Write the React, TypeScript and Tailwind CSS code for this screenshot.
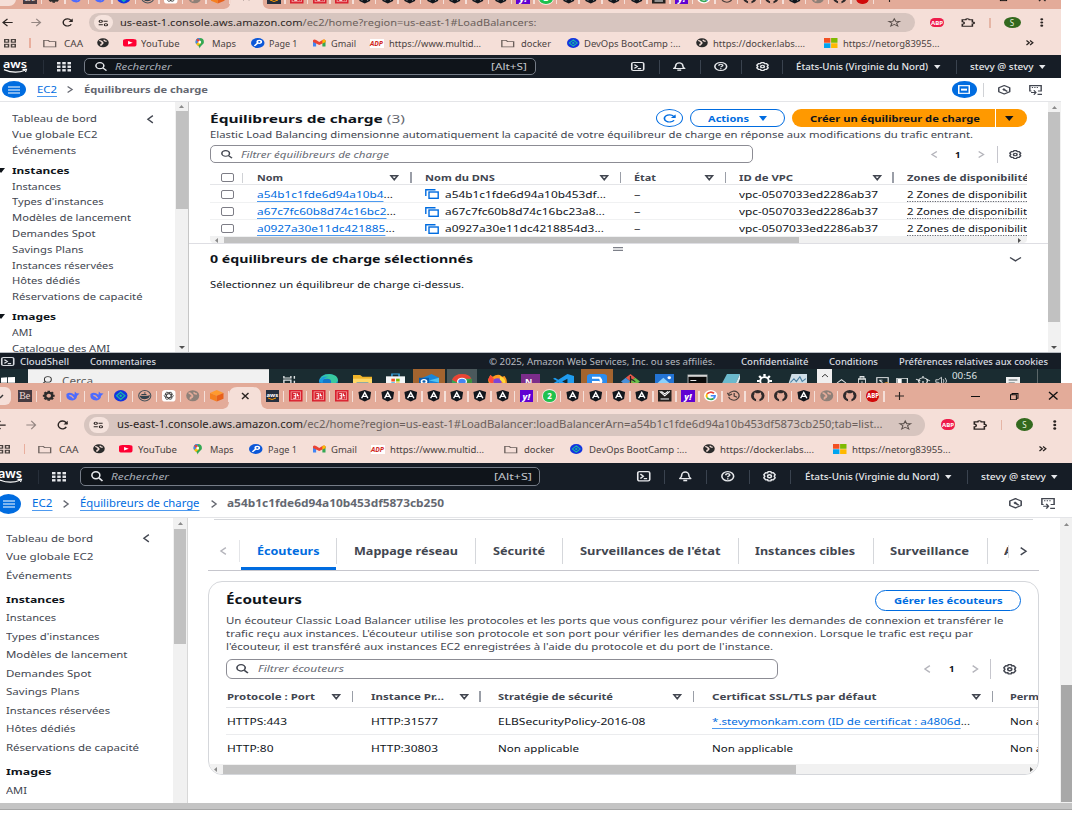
import React, { useLayoutEffect, useRef, useState } from "react";
import type { ReactNode } from "react";

/** One line of text, stretched horizontally to fill the width its class gives. */
function T({ c, children }: { c: string; children: ReactNode }) {
  const outer = useRef<HTMLSpanElement>(null);
  const inner = useRef<HTMLSpanElement>(null);
  const [scale, setScale] = useState(1);
  useLayoutEffect(() => {
    if (outer.current && inner.current) {
      const box = outer.current.getBoundingClientRect().width;
      const text = parseFloat(getComputedStyle(inner.current).width);
      if (text > 0) setScale(box / text);
    }
  }, []);
  return (
    <span ref={outer} className={`block shrink-0 whitespace-nowrap ${c}`}>
      <span ref={inner} className="inline-block origin-left whitespace-pre" style={{ transform: `scaleX(${scale})` }}>
        {children}
      </span>
    </span>
  );
}

function S({ c, vb = "0 0 16 16", children }: { c: string; vb?: string; children: ReactNode }) {
  return (
    <svg className={`block shrink-0 overflow-visible ${c}`} viewBox={vb} preserveAspectRatio="none" fill="none" stroke="currentColor">
      {children}
    </svg>
  );
}

/* ---------- generic icons ---------- */
const Caret = ({ c }: { c: string }) => (
  <S c={c} vb="0 0 8 6"><path d="M0 0H8L4 6Z" fill="currentColor" stroke="none" /></S>
);
const SortIcon = () => (
  <S c="w-[8.5px] h-[5.5px] text-[#424650]" vb="0 0 9 6"><path d="M1 .8H8L4.5 5.2Z" strokeWidth="1.6" /></S>
);
const Left = ({ c }: { c: string }) => (
  <S c={c} vb="0 0 7 9"><path d="M6.3 .7L1 4.5L6.3 8.3" strokeWidth="1.5" /></S>
);
const Right = ({ c }: { c: string }) => (
  <S c={c} vb="0 0 7 9"><path d="M.7 .7L6 4.5L.7 8.3" strokeWidth="1.5" /></S>
);
const Lens = ({ c }: { c: string }) => (
  <S c={c}><circle cx="6.5" cy="6.5" r="5.3" strokeWidth="2.100" /><path d="M10.5 10.5L15.3 15.3" strokeWidth="2.300" /></S>
);
const Gear = ({ c }: { c: string }) => (
  <S c={c}>
    <path d="M6.2 1H9.8L10.4 3L12.6 2.6L14.9 5.6L13.8 8L14.9 10.4L12.6 13.4L10.4 13L9.8 15H6.2L5.6 13L3.4 13.4L1.1 10.4L2.2 8L1.1 5.6L3.4 2.6L5.6 3Z" strokeWidth="2" strokeLinejoin="round" />
    <circle cx="8" cy="8" r="2.3" strokeWidth="2" />
  </S>
);
const ShellIcon = ({ c }: { c: string }) => (
  <S c={c}><rect x=".9" y="1" width="14.2" height="14" rx="2" strokeWidth="1.900" /><path d="M4 4.5L7.5 8L4 11.5M8 11.8H12" strokeWidth="1.900" /></S>
);
const Bell = ({ c }: { c: string }) => (
  <S c={c}><path d="M1 11.5C3.5 9.5 3.5 8 3.5 6A4.5 4.5 0 0 1 12.500 6C12.500 8 12.500 9.500 15 11.500Z" strokeWidth="2" strokeLinejoin="round" /><path d="M5.500 14.500H10.500" strokeWidth="2.400" /></S>
);
const Help = ({ c }: { c: string }) => (
  <S c={c}><circle cx="8" cy="8" r="7" strokeWidth="1.900" /><path d="M5.700 6.500C5.700 3.300 10.500 3.500 10.300 6.300C10.200 7.800 8 7.700 8 9.500M8 11V12.800" strokeWidth="1.900" /></S>
);
const Hexagon = ({ c }: { c: string }) => (
  <S c={c}><path d="M8 1L15 4.500V11.500L8 15L1 11.500V4.500Z" strokeWidth="1.900" strokeLinejoin="round" /><path d="M12 11L7.500 7.500" strokeWidth="2.200" /><circle cx="7.500" cy="7.500" r="1.300" fill="currentColor" strokeWidth="1" /></S>
);
const TermArrow = ({ c }: { c: string }) => (
  <S c={c}><path d="M3 9.500H1V1H15V9.500H11M3.500 4H5M6.500 4H8M9.500 4H11M2.500 12H8M6 8.500L8.500 12L6 15.500M10.500 15H16" strokeWidth="1.700" /></S>
);
const Dots = ({ c }: { c: string }) => (
  <S c={c} vb="0 0 4 14"><g fill="currentColor" stroke="none"><circle cx="2" cy="2" r="1.700" /><circle cx="2" cy="7" r="1.700" /><circle cx="2" cy="12" r="1.700" /></g></S>
);
const Star = ({ c }: { c: string }) => (
  <S c={c}><path d="M8 1.300L9.900 6H15L11 9.200L12.500 14.500L8 11.500L3.500 14.500L5 9.200L1 6H6.100Z" strokeWidth="1.400" /></S>
);
const Puzzle = ({ c }: { c: string }) => (
  <S c={c}><path d="M1.500 3H5.500C5.500 .5 9.500 .5 9.500 3H13V7C16 7 16 10.500 13 10.500V14.500H1.500V11C4.500 11 4.500 6.500 1.500 6.500Z" strokeWidth="1.800" /></S>
);
const Tune = ({ c }: { c: string }) => (
  <S c={c}><circle cx="4" cy="4.500" r="2.300" strokeWidth="1.800" /><path d="M8 4.500H14M1 11.500H7" strokeWidth="1.900" /><circle cx="11.500" cy="11.500" r="2.300" strokeWidth="1.800" /></S>
);
const BackArrow = ({ c }: { c: string }) => (
  <S c={c}><path d="M15.500 8H2M8 1.500L1.500 8L8 14.500" strokeWidth="2" /></S>
);
const FwdArrow = ({ c }: { c: string }) => (
  <S c={c}><path d="M.5 8H14M8 1.500L14.500 8L8 14.500" strokeWidth="1.900" /></S>
);
const Reload = ({ c }: { c: string }) => (
  <S c={c}><path d="M13.500 11A6.300 6.300 0 1 1 13 4L15 6" strokeWidth="2.100" /><path d="M15.500 1V7H9.500Z" fill="currentColor" stroke="none" /></S>
);
const AppsIcon = ({ c }: { c: string }) => (
  <S c={c}><g strokeWidth="2"><rect x="1" y="1" width="5" height="5" /><rect x="10" y="1" width="5" height="5" /><rect x="1" y="10" width="5" height="5" /><rect x="10" y="10" width="5" height="5" /></g></S>
);
const GridDots = ({ c }: { c: string }) => (
  <S c={c}><g fill="currentColor" stroke="none">
    {[0, 6, 12].map((y) => [0, 6, 12].map((x) => <rect key={`${x}-${y}`} x={x} y={y} width="4" height="4" />))}
  </g></S>
);
const Folder = ({ c }: { c: string }) => (
  <S c={c}><path d="M1 2.500H6L8 4.700H15V14H1Z" strokeWidth="1.600" /></S>
);
const Globe = ({ c }: { c: string }) => (
  <S c={c}><circle cx="8" cy="8" r="7.700" fill="currentColor" stroke="none" /><path d="M3 4.500Q5 4 6.500 6.500Q8.500 8 7 10Q5 9.500 5.500 13" stroke="#f5dfd8" strokeWidth="2.300" /><path d="M9.500 3Q9.500 5.500 13 5.500" stroke="#f5dfd8" strokeWidth="2" /></S>
);
const YouTube = ({ c }: { c: string }) => (
  <S c={c}><rect width="16" height="16" rx="4" fill="#ff0033" stroke="none" /><path d="M6 4.500V11.500L11.500 8Z" fill="#fff" stroke="none" /></S>
);
const Pin = ({ c }: { c: string }) => (
  <S c={c}><g stroke="none"><path d="M8 16C7 11 1 10 1 6A7 6 0 0 1 15 6C15 10 9 11 8 16Z" fill="#34a853" /><path d="M1 6A7 6 0 0 1 8 0V6L2 9Q1 8 1 6Z" fill="#4285f4" /><path d="M2 3L5 .6L9 4L6 7Z" fill="#ea4335" /><path d="M2 9L7 5L10 8L5 12Z" fill="#fbbc04" /><circle cx="8" cy="6" r="2.300" fill="#fff" /></g></S>
);
const PageIcon = ({ c }: { c: string }) => (
  <S c={c}><circle cx="8" cy="8" r="8" fill="#0b57d8" stroke="none" /><circle cx="9.800" cy="6" r="2.400" stroke="#fff" strokeWidth="2" /><path d="M8 8L4 12.500" stroke="#fff" strokeWidth="2" /></S>
);
const Gmail = ({ c }: { c: string }) => (
  <S c={c}><g stroke="none"><path d="M0 3L4 5.500V15H0Z" fill="#4285f4" /><path d="M12 5.500L16 3V15H12Z" fill="#34a853" /><path d="M0 3Q1 0 4 2L8 6L12 2Q15 0 16 3V6L8 12L0 6Z" fill="#ea4335" /><path d="M12 2Q15 0 16 3V6L12 9Z" fill="#fbbc04" /></g></S>
);
const AdpMark = ({ c }: { c: string }) => (
  <span className={`flex items-center justify-center bg-white text-[#d0271d] italic font-bold text-[7px] leading-none ${c}`}><T c="w-[13px]">ADP</T></span>
);
const DevMark = ({ c }: { c: string }) => (
  <S c={c}><circle cx="8" cy="8" r="8" fill="#1333e0" stroke="none" /><path d="M8 3L13 8L8 13L3 8Z" stroke="#19b5a5" strokeWidth="1.600" /><path d="M8 6L10 8L8 10L6 8Z" fill="#19b5a5" stroke="none" /></S>
);
const MsMark = ({ c }: { c: string }) => (
  <S c={c}><g stroke="none"><rect width="7.600" height="7.600" fill="#f25022" /><rect x="8.400" width="7.600" height="7.600" fill="#7fba00" /><rect y="8.400" width="7.600" height="7.600" fill="#00a4ef" /><rect x="8.400" y="8.400" width="7.600" height="7.600" fill="#ffb900" /></g></S>
);
const CopyIcon = () => (
  <S c="w-[14px] h-[10px] text-[#006ce0]" vb="0 0 14 10"><path d="M.8 7V.8H10.500" strokeWidth="1.400" /><rect x="4" y="3" width="9.200" height="6.300" strokeWidth="1.400" /></S>
);

/* ---------- tab icons ---------- */
function Fav({ k, c }: { k: string; c: string }) {
  switch (k) {
    case "be":
      return <span className={`flex items-center justify-center bg-[#453a40] text-[#f0dcd6] text-[10px] leading-none font-["Liberation_Serif",serif] ${c}`}>Be</span>;
    case "cog":
      return <S c={c}><circle cx="8" cy="8" r="4.200" stroke="#2b2b2b" strokeWidth="3" /><path d="M8 1V3M8 13V15M1 8H3M13 8H15M3 3L4.500 4.500M11.500 11.500L13 13M3 13L4.500 11.500M11.500 4.500L13 3" stroke="#2b2b2b" strokeWidth="3" /></S>;
    case "whale":
      return <S c={c}><path d="M.5 5.500Q-.5 14 7.500 14.500Q13 14 13 8.500L16 5L12.500 4.500L10.500 2L10 6.500Q5 2 .5 5.500Z" fill="#4d6bfe" stroke="none" /><path d="M4 7.500Q7 7.500 9 11.500" stroke="#e3ab99" strokeWidth="1.500" /></S>;
    case "dev":
      return <DevMark c={c} />;
    case "docker":
      return <S c={c}><circle cx="8" cy="8" r="7.200" stroke="#4a545c" strokeWidth="1.300" /><path d="M2 8H12L14 6.500Q14 12 8 13Q3 13 2 8ZM4 5.500H10V7H4ZM7 3.500H9V5H7Z" fill="#33414b" stroke="none" /></S>;
    case "gpt":
      return <S c={c}><rect width="16" height="16" rx="4" fill="#fff" stroke="none" /><g stroke="#222" strokeWidth=".9"><ellipse cx="8" cy="8" rx="5.500" ry="2.600" /><ellipse cx="8" cy="8" rx="5.500" ry="2.600" transform="rotate(60 8 8)" /><ellipse cx="8" cy="8" rx="5.500" ry="2.600" transform="rotate(120 8 8)" /></g></S>;
    case "globe":
      return <S c={c}><circle cx="8" cy="8" r="7.700" fill="#8e8078" stroke="none" /><path d="M3 4.500Q5 4 6.500 6.500Q8.500 8 7 10Q5 9.500 5.500 13" stroke="#e3ab99" strokeWidth="2.300" /><path d="M9.500 3Q9.500 5.500 13 5.500" stroke="#e3ab99" strokeWidth="2" /></S>;
    case "cube":
      return <S c={c}><g stroke="none"><path d="M8 0L16 4L8 8L0 4Z" fill="#ff9a2e" /><path d="M0 4L8 8V16L0 12Z" fill="#f5801f" /><path d="M16 4L8 8V16L16 12Z" fill="#e8601a" /></g></S>;
    case "aws":
      return <span className={`flex flex-col items-center justify-center bg-[#252f3e] text-white text-[6px] leading-none font-bold ${c}`}>aws<S c="w-2 h-[2px] text-[#ff9900]" vb="0 0 8 2"><path d="M0 0Q4 3 8 0" /></S></span>;
    case "adp":
      return <S c={c}><rect width="16" height="16" fill="#d9202e" stroke="none" /><rect x="2.500" y="2.500" width="11" height="11" stroke="#f3a5a5" strokeWidth="1" /><path d="M5 5H8V11.500H5M5.500 8H8M10 5V8H12M10.500 11H12" stroke="#fff" strokeWidth="1.200" /></S>;
    case "ng":
      return <S c={c}><path d="M8 0L15.500 2.700L14.300 12.500L8 16L1.700 12.500L.5 2.700Z" fill="#11161d" stroke="none" /><path d="M4.300 11.500L8 3.500L11.700 11.500M5.800 9H10.200" stroke="#fff" strokeWidth="1.700" /></S>;
    case "yahoo":
      return <span className={`flex items-center justify-center bg-[#6001d2] text-white text-[9px] leading-none font-extrabold italic ${c}`}>y!</span>;
    case "wa":
      return <span className={`flex items-center justify-center rounded-[50%] bg-[#1fc14e] ring-1 ring-white/70 text-white text-[8px] leading-none font-bold ${c}`}>2</span>;
    case "mail":
      return <S c={c}><rect width="16" height="16" fill="#23201f" stroke="none" /><path d="M2 2L8 8L14 2M4 2L8 5.500L12 2" stroke="#fff" strokeWidth="1.300" /><path d="M3 12.500H13" stroke="#bbb" strokeWidth="2" /></S>;
    case "google":
      return <S c={c}><circle cx="8" cy="8" r="8" fill="#fff" stroke="none" /><g strokeWidth="2.200"><path d="M11.800 4.700A5 5 0 0 0 3.700 5.500" stroke="#ea4335" /><path d="M3.700 5.500A5 5 0 0 0 3.700 10.500" stroke="#fbbc04" /><path d="M3.700 10.500A5 5 0 0 0 11.500 11.600" stroke="#34a853" /><path d="M11.500 11.600Q13 10 13 8H8" stroke="#4285f4" /></g></S>;
    case "history":
      return <S c={c}><path d="M2.500 5A6.300 6.300 0 1 1 2 9.500M.5 4L2.500 7.500L6 5.500M8.500 4V8.500L12 10" stroke="#4a3f3c" strokeWidth="1.500" /></S>;
    case "github":
      return <S c={c}><circle cx="8" cy="8" r="8" fill="#2e292a" stroke="none" /><path d="M6 16.500V12.800Q3.300 12 3.300 8Q3.300 6.800 4.100 6V3.600Q5.500 3.800 6.500 4.600H9.500Q10.500 3.800 11.900 3.600V6Q12.700 6.800 12.700 8Q12.700 12 10 12.800V16.500Z" fill="#e3ab99" stroke="none" /></S>;
    default:
      return <span className={`flex items-center justify-center rounded-[6px] bg-[#d00a0a] text-white text-[6.500px] leading-none font-bold ${c}`}><T c="w-[12px]">ABP</T></span>;
  }
}

const leftTabs = ["be", "cog", "whale", "whale", "dev", "docker", "gpt", "globe", "cube"];
const rightTabs = ["aws", "adp", "adp", "adp", "ng", "ng", "ng", "ng", "ng", "ng", "ng", "yahoo", "wa", "ng", "ng", "ng", "ng", "mail", "yahoo", "google", "history", "github", "github", "ng", "globe", "github", "abp"];

function TabList({ tabs, cell }: { tabs: string[]; cell: string }) {
  return (
    <div className="flex items-center shrink-0">
      {tabs.map((k, i) => (
        <div key={i} className={`flex items-center shrink-0 ${cell}`}>
          <span className="grow flex justify-center pl-px"><Fav k={k} c="w-[13.500px] h-[11.500px]" /></span>
          <i className="block w-[1.500px] h-[11px] bg-[#f5dfd8]" />
        </div>
      ))}
    </div>
  );
}

const TabShape = ({ c, children }: { c: string; children: ReactNode }) => (
  <div className={`relative shrink-0 flex items-center justify-center ${c}`}>
    <svg className="absolute -left-[6px] bottom-0 w-[calc(100%+12px)] h-full" viewBox="0 0 44 23" preserveAspectRatio="none">
      <path d="M0 23Q6 22 6 15V7Q7 0 14 0H30Q37 0 38 7V15Q38 22 44 23Z" fill="#f5dfd8" />
    </svg>
    <span className="relative">{children}</span>
  </div>
);
const Cross = () => <S c="w-[6.500px] h-[6px] text-[#2b2422]" vb="0 0 8 8"><path d="M0 0L8 8M8 0L0 8" strokeWidth="1.700" /></S>;

/* ---------- browser toolbar ---------- */
type BarLayout = {
  row: string; pill: string; disc: string; url: string; icon: string; h: string; avatar: string;
};
function Toolbar({ l, url }: { l: BarLayout; url: ReactNode }) {
  return (
    <div className={`grid items-center text-[#2b2422] ${l.row}`}>
      <BackArrow c={`w-[11px] ${l.icon}`} />
      <FwdArrow c={`w-[10.500px] text-[#948682] ${l.icon}`} />
      <Reload c={`w-[11px] ${l.icon}`} />
      <div className={`grid items-center rounded-full bg-[#d7c5bf] ${l.pill}`}>
        <span className={`flex items-center justify-center rounded-full bg-[#f5e3dd] ${l.disc}`}>
          <Tune c="w-[11px] h-[8px]" />
        </span>
        <T c={`text-[#6b5f5b] ${l.url}`}>{url}</T>
        <Star c={`w-[12.500px] text-[#5a4f4b] ${l.icon}`} />
      </div>
      <span className={`flex items-center justify-center rounded-[6px] bg-[#ee1c4a] text-white font-bold text-[6px] leading-none w-[14px] ${l.h}`}><T c="w-[12px]">ABP</T></span>
      <Puzzle c={`w-[14px] ${l.icon}`} />
      <i className="block w-[1.500px] h-[10px] bg-[#e5b5a5]" />
      <span className={`flex items-center justify-center rounded-[50%] bg-[#33691e] text-[#e4f0dd] text-[8px] leading-none w-[17px] ${l.avatar}`}>S</span>
      <Dots c={`w-[3.500px] ${l.icon}`} />
    </div>
  );
}

function Bookmarks({ row, w }: { row: string; w: string[] }) {
  return (
    <div className={`grid items-center text-[#4a423f] ${row}`}>
      <AppsIcon c="w-[12px] h-[8.500px]" />
      <i className="block w-[1.500px] h-[10px] bg-[#e9ae9d]" />
      <Folder c="w-[13.500px] h-[9px] text-[#6a5f5b]" />
      <T c={w[0]}>CAA</T>
      <Globe c="w-[12px] h-[9.500px] text-[#2b2b2b]" />
      <YouTube c="w-[13.500px] h-[7.500px]" />
      <T c={w[1]}>YouTube</T>
      <Pin c="w-[9.500px] h-[10.500px]" />
      <T c={w[2]}>Maps</T>
      <PageIcon c="w-[13.500px] h-[10px]" />
      <T c={w[3]}>Page 1</T>
      <Gmail c="w-[12.500px] h-[8px]" />
      <T c={w[4]}>Gmail</T>
      <AdpMark c="w-[14px] h-[9px]" />
      <T c={w[5]}>https://www.multid...</T>
      <Folder c="w-[13.500px] h-[9px] text-[#6a5f5b]" />
      <T c={w[6]}>docker</T>
      <DevMark c="w-[12.500px] h-[10px]" />
      <T c={w[7]}>DevOps BootCamp :...</T>
      <Globe c="w-[12px] h-[9.500px] text-[#2b2b2b]" />
      <T c={w[8]}>https://docker.labs....</T>
      <MsMark c="w-[13.500px] h-[10px]" />
      <T c={w[9]}>https://netorg83955...</T>
      <S c="w-[7.500px] h-[5.500px] text-[#2b2422]" vb="0 0 8 6"><path d="M.5 .5L3.500 3L.5 5.500M4.300 .5L7.300 3L4.300 5.500" strokeWidth="1.400" /></S>
    </div>
  );
}

/* ---------- AWS header ---------- */
type NavLayout = { row: string; aws: string; box: string; search: string; alt: string; region: string; user: string; icon: string };
function AwsNav({ l }: { l: NavLayout }) {
  const sep = <i className="block w-px h-[14px] bg-[#3a434f]" />;
  return (
    <div className={`grid items-center bg-[#161d26] text-[#e6e8eb] ${l.row}`}>
      <span className={`flex flex-col text-white font-semibold leading-none ${l.aws}`}>
        <T c="w-[24px] h-[9px] leading-[8px]">aws</T>
        <S c="w-[25px] h-[4px]" vb="0 0 25 4"><path d="M1 .6Q12 5.500 22 1.200M19.500 .4L23.500 .3L22.500 3" strokeWidth="1.200" /></S>
      </span>
      <i className="block w-px h-[14px] bg-[#272f3a]" />
      <GridDots c="w-[14px] h-[9.500px]" />
      <div className={`grid items-center rounded-[5px] border border-[#757c87] bg-[#0f141a] ${l.box}`}>
        <Lens c={`w-[12px] ${l.icon}`} />
        <T c={`italic text-[#a9afb8] ${l.search}`}>Rechercher</T>
        <T c={`text-[#c3c7cd] ${l.alt}`}>[Alt+S]</T>
      </div>
      <ShellIcon c={`w-[13.500px] ${l.icon}`} />{sep}
      <Bell c={`w-[12.500px] ${l.icon}`} />{sep}
      <Help c={`w-[13.500px] ${l.icon}`} />{sep}
      <Gear c={`w-[13px] ${l.icon}`} />{sep}
      <T c={`font-medium ${l.region}`}>États-Unis (Virginie du Nord)</T>
      <Caret c="w-[6.500px] h-[4px]" />{sep}
      <T c={`font-medium ${l.user}`}>stevy @ stevy</T>
      <Caret c="w-[6.500px] h-[4px]" />
    </div>
  );
}

const Menu = ({ c }: { c: string }) => (
  <span className={`flex items-center justify-center rounded-[50%] bg-[#006ce0] ${c}`}>
    <S c="w-[12px] h-[8px] text-white" vb="0 0 12 8"><path d="M0 1H12M0 4H12M0 7H12" strokeWidth="1.200" /></S>
  </span>
);

/* ---------- side navigation ---------- */
type Item = [string, string, boolean?];
const side1: Item[] = [
  ["Tableau de bord", "w-[85px]"], ["Vue globale EC2", "w-[85.500px]"], ["Événements", "w-[64px]"],
  ["Instances", "w-[57.500px]", true], ["Instances", "w-[49px]"], ["Types d'instances", "w-[91.500px]"],
  ["Modèles de lancement", "w-[119px]"], ["Demandes Spot", "w-[83.500px]"], ["Savings Plans", "w-[71.500px]"],
  ["Instances réservées", "w-[101.500px]"], ["Hôtes dédiés", "w-[68px]"], ["Réservations de capacité", "w-[130.500px]"],
  ["Images", "w-[44px]", true], ["AMI", "w-[20px]"], ["Catalogue des AMI", "w-[98px]"],
];
const side2: Item[] = [
  ["Tableau de bord", "w-[87px]"], ["Vue globale EC2", "w-[87.500px]"], ["Événements", "w-[66px]"],
  ["Instances", "w-[59px]", true], ["Instances", "w-[50px]"], ["Types d'instances", "w-[93.500px]"],
  ["Modèles de lancement", "w-[121.500px]"], ["Demandes Spot", "w-[85.500px]"], ["Savings Plans", "w-[73.500px]"],
  ["Instances réservées", "w-[104px]"], ["Hôtes dédiés", "w-[69.500px]"], ["Réservations de capacité", "w-[133px]"],
  ["Images", "w-[45.500px]", true], ["AMI", "w-[21px]"],
];

function Side({ items, frame, line, head, pad, chevron, arrows }: { items: Item[]; frame: string; line: string; head: string; pad: string; chevron: string; arrows?: boolean }) {
  return (
    <nav className={`shrink-0 overflow-hidden text-[#424650] ${frame}`}>
      {items.map(([label, w, bold], i) => (
        <div key={i} className={`flex items-center ${line} ${bold ? head : ""}`}>
          <span className={`shrink-0 ${pad}`}>
            {bold && arrows && <Caret c="-ml-[3px] w-[8px] h-[5px] text-[#0f141a]" />}
          </span>
          <T c={`${w} ${bold ? "font-bold text-[#0f141a]" : ""}`}>{label}</T>
          {i === 0 && <Left c={`w-[6.500px] h-[8.500px] ml-auto text-[#424650] ${chevron}`} />}
        </div>
      ))}
    </nav>
  );
}

const Up = () => <S c="w-[5px] h-[3px] text-[#8b8b8b]" vb="0 0 6 3"><path d="M0 3H6L3 0Z" fill="currentColor" stroke="none" /></S>;
const Down = () => <S c="w-[6px] h-[3px] text-[#505050]" vb="0 0 6 3"><path d="M0 0H6L3 3Z" fill="currentColor" stroke="none" /></S>;
const TriL = () => <S c="w-[3px] h-[5px] text-[#8b8b8b]" vb="0 0 3 6"><path d="M3 0V6L0 3Z" fill="currentColor" stroke="none" /></S>;
const TriR = () => <S c="w-[3px] h-[5px] text-[#505050]" vb="0 0 3 6"><path d="M0 0V6L3 3Z" fill="currentColor" stroke="none" /></S>;

const Sep = () => <i className="block w-[1.500px] h-[11px] -ml-[.5px] bg-[#9a9ea7]" />;
const Check = () => <i className="block w-[13px] h-[9px] rounded-[2px] border border-[#7d7d86] bg-white" />;
const Link = ({ children }: { children: ReactNode }) => (
  <span className="text-[#006ce0] underline decoration-[#4d9af0] underline-offset-[3px]">{children}</span>
);
const Dashed = ({ children }: { children: ReactNode }) => (
  <span className="underline decoration-dotted decoration-[#656871] underline-offset-[3px]">{children}</span>
);

const balancers = [
  { name: "a54b1c1fde6d94a10b4", nw: "w-[136px]", dns: "a54b1c1fde6d94a10b453df...", dw: "w-[161px]", line: "h-[18px] pt-[1.500px]" },
  { name: "a67c7fc60b8d74c16bc2", nw: "w-[139px]", dns: "a67c7fc60b8d74c16bc23a8...", dw: "w-[160px]", line: "h-[17px] pt-[1.500px]" },
  { name: "a0927a30e11dc421885", nw: "w-[138px]", dns: "a0927a30e11dc4218854d3...", dw: "w-[159px]", line: "h-[17px] pt-[1.500px]" },
];

/* ---------- Windows taskbar ---------- */
function Taskbar() {
  const ic = "w-[19px] h-[15px] mt-[5px]";
  return (
    <div className="h-[14px] overflow-hidden bg-[#1a2c31] text-[#dfe3e4] grid items-start grid-cols-[28px_255px_36px_34px_33px_27px_34px_41px_33px_32px_28px_40px_34px_33px_33px_36px_31px_29px_20px_21px_18px_20px_20px_36px_54px_31px_auto]">
      <S c="w-[14px] h-[12px] mt-[8px] ml-[1px]"><path d="M0 1L7 .4V7.500H0ZM8 .3L16 0V7.500H8ZM0 8.500H7V15L0 14.500ZM8 8.500H16V16L8 15Z" fill="#fff" stroke="none" /></S>
      <div className="flex h-[14px] w-[241px] bg-[#f1f1f1] border-t border-[#c9c9c9] text-[#5b5b5b] text-[10px] leading-none">
        <S c="w-[11px] h-[9px] mt-[6px] ml-[13px] text-[#333]"><circle cx="10" cy="6" r="5" strokeWidth="1.500" /><path d="M6 10L1 15" strokeWidth="1.600" /></S>
        <T c="w-[31px] mt-[6px] ml-[10px]">Cerca</T>
      </div>
      <S c="w-[14px] h-[11px] mt-[7px]"><path d="M1 0V3H9V0M1 16V6H9V16M1 11H9M13 0V4M13 7V16" strokeWidth="1.600" /></S>
      <S c={ic}><g stroke="none"><circle cx="8" cy="8" r="8" fill="#1676c8" /><path d="M0 8Q1 0 9 0Q16 1 16 7Q15 11 10 10Q11 5 7 5Q2 5 0 8Z" fill="#38c9a0" /><path d="M0 8Q2 1 8 3Q3 4 3 10Z" fill="#1b9de2" /></g></S>
      <S c={ic}><path d="M0 1H6L8 3H16V16H0Z" fill="#f0b429" stroke="none" /><rect y="5" width="16" height="11" fill="#ffd867" stroke="none" /><rect x="3" y="9" width="10" height="7" fill="#3a86d0" stroke="none" /></S>
      <S c={ic}><path d="M5 3V0H11V3" stroke="#34a3e0" strokeWidth="1.300" /><rect y="2.500" width="16" height="13" fill="#f4f7f8" stroke="none" /><g stroke="none"><rect x="4.500" y="5" width="3" height="3" fill="#f25022" /><rect x="8.500" y="5" width="3" height="3" fill="#7fba00" /><rect x="4.500" y="9" width="3" height="3" fill="#00a4ef" /><rect x="8.500" y="9" width="3" height="3" fill="#ffb900" /></g></S>
      <span className="block w-[32px] h-[14px] bg-[#a3642f] pl-[6px] overflow-hidden"><S c="w-[20px] h-[15px] mt-[5px]"><path d="M3 4L10 0L16 4V16H3Z" fill="#1a86d9" stroke="none" /><rect y="4" width="8" height="9" fill="#0a5cad" stroke="none" /><circle cx="4" cy="8" r="2" stroke="#fff" strokeWidth="1.400" /><path d="M8 7L16 4V9Z" fill="#4ec2f2" stroke="none" /></S></span>
      <span className="block w-[30px] h-[14px] bg-[#4b595c] pl-[5px] overflow-hidden"><S c="w-[20px] h-[15px] mt-[5px]"><g stroke="none"><circle cx="8" cy="8" r="8" fill="#34a853" /><path d="M0 6Q2 0 8 0Q14 0 15.500 5H8L4 9Z" fill="#ea4335" /><path d="M15.500 5Q17 10 12 15L9 10Z" fill="#3f8f3a" /><circle cx="8" cy="8" r="4" fill="#fff" /><circle cx="8" cy="8" r="3" fill="#4285f4" /></g></S></span>
      <S c={ic}><g stroke="none"><path d="M0 6L2 1L4 3Q7 0 10 1L12 3L14 2Q16 5 16 9Q14 16 8 16Q1 15 0 6Z" fill="#ff9a1f" /><path d="M0 6L2 1L5 5L4 12Z" fill="#ff4a3d" /><circle cx="8" cy="8" r="3.500" fill="#7b45d8" /><path d="M10 2Q16 5 14 11L10 6Z" fill="#ffd93d" /></g></S>
      <span className="block w-[19px] h-[15px] mt-[5px] bg-[#7c2d8a] text-white font-bold text-[9px] leading-[15px] pl-[4px]">N</span>
      <S c="w-[21px] h-[15px] mt-[5px]"><path d="M11 0L16 2V14L11 16L4 9L1.500 11L0 10L3 7.500L0 5L1.500 4L4 6Z" fill="#1f9cf0" stroke="none" /><path d="M11 5V11L7 8Z" fill="#16262b" stroke="none" /></S>
      <span className="block w-[32px] h-[14px] bg-[#a3642f] pl-[6px] overflow-hidden"><S c="w-[20px] h-[15px] mt-[5px]"><rect width="16" height="16" rx="3" fill="#2b8df0" stroke="none" /><path d="M4 4H10Q13 8 9 12M4 8.500H10" stroke="#fff" strokeWidth="2" /></S></span>
      <S c={ic}><g stroke="none"><path d="M8 0L12 4L8 8L4 4Z" fill="#e4584a" /><path d="M4 4L8 8L4 12L0 8Z" fill="#4a90d8" /><path d="M12 4L16 8L12 12L8 8Z" fill="#6cc04a" /><path d="M8 8L12 12L8 16L4 12Z" fill="#f2b632" /></g><path d="M8 2V12M8 5L12 8" stroke="#222" /></S>
      <S c={ic}><rect width="16" height="16" fill="#2374d4" stroke="none" /><path d="M0 12L7 4L16 14V16H0Z" fill="#8cd0fa" stroke="none" /><circle cx="12" cy="4" r="1.500" fill="#fff" stroke="none" /></S>
      <S c={ic}><rect y="1" width="16" height="15" fill="#0a0a0a" stroke="#8f9698" /><path d="M0 2H16" stroke="#d5d5d5" strokeWidth="2" /><path d="M2 7H7" stroke="#fff" /></S>
      <S c={ic}><path d="M5 0H16L11 14L0 12Z" fill="#6bb9cc" stroke="none" /><path d="M16 0L11 14L13 15L16 5Z" fill="#dbeef2" stroke="none" /></S>
      <S c="w-[15px] h-[14px] mt-[5px]"><circle cx="8" cy="8" r="4.500" strokeWidth="2" stroke="#fff" /><path d="M8 0V3M0 8H3M13 8H16M2.300 2.300L4.500 4.500M11.500 4.500L13.700 2.300" stroke="#fff" strokeWidth="2.500" /></S>
      <S c={ic}><path d="M3 0H16V12H0Z" fill="#cfdfe8" stroke="none" /><path d="M2 9L5 5L7 8L10 3L12 8L15 5" stroke="#4a7fa0" /></S>
      <span className="flex justify-center w-[15px] h-[14px] bg-[#efefef]"><S c="w-[6px] h-[3px] mt-[5px] text-[#333]" vb="0 0 8 4"><path d="M0 4L4 .5L8 4" strokeWidth="1.300" /></S></span>
      <S c="w-[9px] h-[4px] mt-[10px]" vb="0 0 10 5"><path d="M0 5L5 .7L10 5" strokeWidth="1.200" /></S>
      <S c="w-[8px] h-[12px] mt-[7px]"><path d="M1 16V4H15V16M4 4V1H12V4M8 7V11" strokeWidth="1.800" /></S>
      <S c="w-[13px] h-[10px] mt-[8px]"><rect x="1" y="1" width="14" height="13" strokeWidth="1.500" /><path d="M4 5L8 9M8 5H4" strokeWidth="1.500" /><circle cx="13" cy="12" r="3.500" fill="#f59b23" stroke="none" /></S>
      <S c="w-[13px] h-[8px] mt-[9px]"><rect x="1" y="1" width="13" height="12" strokeWidth="1.500" /><rect x="2" y="2" width="5" height="10" fill="#fff" stroke="none" /></S>
      <span className="flex mt-[7px]">
        <S c="w-[14px] h-[10px]"><circle cx="8" cy="8" r="5" strokeWidth="1.500" /><path d="M0 5L5 8M8 0V3M12 5L16 8M8 8V16" strokeWidth="1.400" /></S>
        <S c="w-[13px] h-[10px] ml-[5px]"><path d="M1 6H4L8 2V14L4 10H1ZM10 5Q12 8 10 11M12.500 3Q16 8 12.500 13" strokeWidth="1.200" /></S>
      </span>
      <T c="w-[25px] text-[8px] leading-none mt-[3px]">00:56</T>
      <S c="w-[14px] h-[12px] mt-[8px]"><path d="M0 0H16V12H6L3 15V12H0Z" fill="#eef0f0" stroke="none" /><path d="M3 4H13M3 8H10" stroke="#27383c" /></S>
      <i className="block w-px h-[14px] bg-[#5b6769]" />
    </div>
  );
}

/* ---------- top window ---------- */
function ListWindow() {
  return (
    <section className="w-[1061px] h-[383px] shrink-0 flex flex-col overflow-hidden text-[9px] leading-[11px]">
      <div className="h-[9px] overflow-hidden bg-[#e3ab99] flex items-end shrink-0">
        <div className="flex items-center h-[17px] pl-[18.500px] relative">
          <i className="absolute left-0 bottom-[3px] w-[16px] h-[14px] rounded-r-[7px] bg-[#f5dfd8]" />
          <div className="pb-[5px]"><TabList tabs={leftTabs} cell="w-[23.500px]" /></div>
          <TabShape c="w-[33px] h-[17px]"><span className="block pb-[7px]"><Cross /></span></TabShape>
          <div className="pb-[5px]"><TabList tabs={rightTabs} cell="w-[22.650px]" /></div>
          <S c="w-[9px] h-[8px] ml-[11px] mb-[6px] text-[#2b2422]"><path d="M8 0V16M0 8H16" strokeWidth="2" /></S>
          <S c="w-[7px] h-[6px] ml-[106px] mb-[6px] text-[#111]"><rect x="1" y="1" width="14" height="14" strokeWidth="2.500" /></S>
          <span className="ml-[32px] mb-[6px]"><Cross /></span>
        </div>
      </div>
      <div className="bg-[#f5dfd8] h-[46px] shrink-0">
        <Toolbar
          l={{
            row: "h-[27px] pl-[1.500px] grid-cols-[29.500px_31px_27px_841px_31px_28px_14.500px_36.500px_auto]",
            pill: "w-[826px] h-[19px] pl-[5px] grid-cols-[25.500px_768.500px_auto]",
            disc: "w-[19px] h-[15px]", url: "w-[416.500px]", icon: "h-[9px]", h: "h-[9px]", avatar: "h-[11px]",
          }}
          url={<><span className="text-[#2b2422]">us-east-1.console.aws.amazon.com</span>/ec2/home?region=us-east-1#LoadBalancers:</>}
        />
        <Bookmarks
          row="h-[14px] pl-[3.500px] text-[8.500px] grid-cols-[25.500px_14.400px_20.300px_33.300px_26px_18.500px_53.500px_17px_39px_17.600px_44.100px_18.300px_39px_19px_112px_20.500px_45.500px_17px_111.600px_17.900px_110.500px_18.600px_183.900px_auto]"
          w={["w-[19px]", "w-[38.500px]", "w-[24px]", "w-[28.500px]", "w-[25px]", "w-[92px]", "w-[30px]", "w-[96.500px]", "w-[92px]", "w-[96.500px]"]}
        />
      </div>
      <AwsNav
        l={{
          row: "h-[23px] shrink-0 pl-[3px] grid-cols-[40px_14px_27.400px_546.600px_27.700px_14.300px_27.400px_13.600px_27px_15px_26.400px_14.100px_137.500px_21.600px_14.400px_69px_auto]",
          aws: "text-[11.500px]", box: "w-[452px] h-[16.500px] pl-[9.500px] grid-cols-[20px_376.500px_auto]",
          search: "w-[56.500px]", alt: "w-[36px]", region: "w-[132px] text-[8px]", user: "w-[63.500px] text-[8px]", icon: "h-[9px]",
        }}
      />
      <div className="h-[24px] shrink-0 border-b border-[#e4e5e8] bg-white flex items-center pl-[2px] text-[#656871]">
        <Menu c="w-[24px] h-[17px]" />
        <T c="w-[20px] ml-[11px] text-[9.500px]"><Link>EC2</Link></T>
        <Right c="w-[6px] h-[7px] ml-[10px]" />
        <T c="w-[124px] ml-[11px] font-bold">Équilibreurs de charge</T>
        <span className="flex items-center justify-center w-[24.500px] h-[17px] rounded-[50%] bg-[#006ce0] ml-[744px] text-white">
          <S c="w-[12px] h-[9px]"><rect x="1" y="1.200" width="14" height="13.600" strokeWidth="2" /><path d="M4 6.500H12V10H4Z" fill="currentColor" stroke="none" /></S>
        </span>
        <i className="block w-px h-[14px] bg-[#d0d2d6] ml-[6.500px]" />
        <Hexagon c="w-[12.500px] h-[9.500px] ml-[13.500px] text-[#424650]" />
        <TermArrow c="w-[13px] h-[10px] ml-[19px] text-[#424650]" />
      </div>
      <div className="flex h-[251px] shrink-0 bg-white border-b border-[#b8bcc2]">
        <Side items={side1} frame="w-[175px] pt-[9px]" line="h-[15.800px]" head="mt-[4px]" pad="w-[12px]" chevron="mr-[21.500px]" arrows />
        <div className="w-[14px] shrink-0 bg-[#f1f1f1] border-r border-[#c6c6c6] flex flex-col items-center justify-between pb-[3px]">
          <span className="flex flex-col items-center w-full">
            <span className="h-[9px] flex items-center"><Up /></span>
            <i className="block w-[12px] h-[98px] bg-[#c1c1c1]" />
          </span>
          <Down />
        </div>
        <main className="grow min-w-0">
          <div className="pl-[21px] pt-[7px]">
            <div className="grid items-center h-[18px] grid-cols-[446px_34px_102px_auto]">
              <T c="w-[195px] text-[11px] leading-none font-bold text-[#0f141a]">Équilibreurs de charge <span className="font-normal text-[#656871]">(3)</span></T>
              <span className="flex items-center justify-center w-[27px] h-[18px] rounded-[50%] border-[1.500px] border-[#006ce0] text-[#006ce0]"><Reload c="w-[13px] h-[9px]" /></span>
              <span className="flex items-center w-[95px] h-[18px] rounded-full border-[1.500px] border-[#006ce0] text-[#006ce0] pl-[16.500px]">
                <T c="w-[41px] font-bold">Actions</T>
                <Caret c="w-[8px] h-[5px] ml-[10px]" />
              </span>
              <span className="flex h-[18px] w-[235px] rounded-full overflow-hidden text-[#0f141a]">
                <span className="flex items-center w-[203px] bg-[#ff9900] pl-[18px]"><T c="w-[170px] font-bold">Créer un équilibreur de charge</T></span>
                <span className="flex items-center w-[31px] ml-[1.500px] bg-[#ff9900] pl-[8.500px]"><Caret c="w-[8.500px] h-[5px]" /></span>
              </span>
            </div>
            <div className="flex items-center h-[15px] text-[#424650]">
              <T c="w-[763px]">Elastic Load Balancing dimensionne automatiquement la capacité de votre équilibreur de charge en réponse aux modifications du trafic entrant.</T>
            </div>
            <div className="mt-[3px] grid items-center h-[18px] text-[#424650] grid-cols-[721px_24px_23px_18.500px_12.500px_auto]">
              <span className="flex items-center w-[543px] h-[17.500px] rounded-[5px] border-[1.500px] border-[#8c8c94] pl-[9.500px]">
                <Lens c="w-[11.500px] h-[8.500px]" />
                <T c="w-[148px] ml-[9px] italic text-[#656871]">Filtrer équilibreurs de charge</T>
              </span>
              <Left c="w-[6.500px] h-[7px] text-[#b4b4bb]" />
              <T c="w-[5.500px] font-bold text-[#0f141a]">1</T>
              <Right c="w-[6.500px] h-[7px] text-[#b4b4bb]" />
              <i className="block w-px h-[17px] bg-[#c6c6cd]" />
              <Gear c="w-[12.500px] h-[9px]" />
            </div>
            <div className="w-[817px] overflow-hidden text-[#0f141a]">
              <div className="grid items-center h-[22px] pt-[8px] pl-[10.500px] border-b border-[#e4e5e8] font-bold text-[#424650] grid-cols-[21.500px_15px_133px_20.500px_14.500px_175px_20px_14px_71px_20px_14px_133.500px_20px_14px_auto]">
                <Check /><i className="block w-px h-[10px] bg-[#d0d2d6]" />
                <T c="w-[26px]">Nom</T><SortIcon /><Sep />
                <T c="w-[70px]">Nom du DNS</T><SortIcon /><Sep />
                <T c="w-[22px]">État</T><SortIcon /><Sep />
                <T c="w-[54px]">ID de VPC</T><SortIcon /><Sep />
                <T c="w-[122px]">Zones de disponibilité</T>
              </div>
              {balancers.map((b) => (
                <div key={b.name} className={`grid items-center pl-[10.500px] border-b border-[#f0f1f2] grid-cols-[36.500px_168px_20px_189px_105px_167.500px_auto] ${b.line}`}>
                  <Check />
                  <T c={b.nw}><Link>{b.name}</Link>...</T>
                  <CopyIcon />
                  <T c={b.dw}>{b.dns}</T>
                  <T c="w-[6.500px]">–</T>
                  <T c="w-[139px]">vpc-0507033ed2286ab37</T>
                  <T c="w-[126.500px]"><Dashed>2 Zones de disponibilité</Dashed></T>
                </div>
              ))}
              <div className="flex items-center h-[6px] bg-[#f1f1f1] rounded-b-[4px] pl-[5px] pr-[6px]">
                <TriL /><i className="block w-[575px] h-[6px] bg-[#c1c1c1] ml-[5.500px] mr-auto" /><TriR />
              </div>
            </div>
          </div>
          <div className="border-t border-[#dedee3] h-[10px] flex justify-center items-center">
            <S c="w-[10px] h-[4px] text-[#7d8089]" vb="0 0 10 4"><path d="M0 .6H10M0 3.400H10" strokeWidth="1.100" /></S>
          </div>
          <div className="pl-[21px] h-[12px] flex items-center text-[#0f141a]">
            <T c="w-[263px] text-[10.500px] leading-none font-bold">0 équilibreurs de charge sélectionnés</T>
            <S c="w-[11px] h-[4.500px] ml-[537px] text-[#424650]" vb="0 0 11 5"><path d="M0 .5L5.500 4.300L11 .5" strokeWidth="1.400" /></S>
          </div>
          <div className="pl-[21px] mt-[13px] h-[12px] flex items-center text-[#0f141a]">
            <T c="w-[254px]">Sélectionnez un équilibreur de charge ci-dessus.</T>
          </div>
        </main>
        <div className="w-[13.500px] shrink-0 bg-[#f1f1f1] flex flex-col items-center justify-between pb-[3px]">
          <span className="flex flex-col items-center w-full">
            <span className="h-[10px] flex items-center"><Up /></span>
            <i className="block w-[12px] h-[210px] bg-[#c1c1c1]" />
          </span>
          <Down />
        </div>
      </div>
      <footer className="h-[16px] shrink-0 bg-[#161d26] text-[#d8dbe0] text-[8px] font-medium grid items-center pl-[1px] grid-cols-[18.500px_70px_399.500px_251.500px_88.500px_70px_auto]">
        <ShellIcon c="w-[13.500px] h-[9px]" />
        <T c="w-[49px]">CloudShell</T>
        <T c="w-[66px]">Commentaires</T>
        <T c="w-[226px] font-normal text-[#b6bac0]">© 2025, Amazon Web Services, Inc. ou ses affiliés.</T>
        <T c="w-[67.500px]">Confidentialité</T>
        <T c="w-[49px]">Conditions</T>
        <T c="w-[149px]">Préférences relatives aux cookies</T>
      </footer>
      <Taskbar />
    </section>
  );
}

/* ---------- bottom window ---------- */
function DetailWindow() {
  const tabSep = <i className="block w-px h-[26px] bg-[#d5d7db]" />;
  return (
    <section className="h-[430px] shrink-0 flex flex-col overflow-hidden text-[9.500px] leading-[13px]">
      <div className="h-[26px] shrink-0 overflow-hidden bg-[#e3ab99] flex items-center">
        <div className="relative flex items-center h-full w-full pl-[13px]">
          <i className="absolute left-0 top-[4px] w-[11px] h-[18px] rounded-r-[6px] bg-[#f5dfd8]" />
          <S c="absolute left-0 top-[12px] w-[3px] h-[3px] text-[#333]" vb="0 0 3 3"><path d="M0 3L3 0" strokeWidth="1.500" /></S>
          <TabList tabs={leftTabs} cell="w-[24px]" />
          <div className="self-end"><TabShape c="w-[32px] h-[22px]"><span className="block pb-[4px]"><Cross /></span></TabShape></div>
          <TabList tabs={rightTabs} cell="w-[23.100px]" />
          <S c="w-[9px] h-[8px] ml-[10px] text-[#2b2422]"><path d="M8 0V16M0 8H16" strokeWidth="2" /></S>
          <i className="block w-[9px] h-px bg-[#111] ml-[67px]" />
          <S c="w-[8.500px] h-[7px] ml-[30px] text-[#111]"><path d="M1 4H12V15H1ZM4 4V1H15V12H12" strokeWidth="2" /></S>
          <span className="ml-[31px]"><S c="w-[8.500px] h-[7.500px] text-[#111]" vb="0 0 8 8"><path d="M0 0L8 8M8 0L0 8" strokeWidth="1.200" /></S></span>
        </div>
      </div>
      <div className="bg-[#f5dfd8] h-[54px] shrink-0">
        <Toolbar
          l={{
            row: "h-[31px] -ml-[5px] w-[1077px] text-[10px] grid-cols-[31px_31px_27px_857px_31.800px_28.200px_15px_37.500px_auto]",
            pill: "w-[841px] h-[22px] pl-[4.500px] grid-cols-[28px_782.500px_auto]",
            disc: "w-[20.500px] h-[16px]", url: "w-[765.500px]", icon: "h-[10px]", h: "h-[11px]", avatar: "h-[13px]",
          }}
          url={<><span className="text-[#2b2422]">us-east-1.console.aws.amazon.com</span>/ec2/home?region=us-east-1#LoadBalancer:loadBalancerArn=a54b1c1fde6d94a10b453df5873cb250;tab=list...</>}
        />
        <Bookmarks
          row="h-[18px] -ml-[2px] w-[1074px] text-[9px] grid-cols-[25.800px_14.200px_21px_34px_26.500px_18.900px_55.100px_16.900px_38.600px_19px_45px_18px_40px_19px_114px_20.500px_45.500px_18.800px_114px_17.200px_112.600px_19px_187.400px_auto]"
          w={["w-[19.500px]", "w-[39px]", "w-[23.500px]", "w-[29px]", "w-[26px]", "w-[94px]", "w-[30.500px]", "w-[98px]", "w-[94px]", "w-[98.500px]"]}
        />
      </div>
      <div className="h-[27px] shrink-0 bg-[#161d26]">
        <AwsNav
          l={{
            row: "h-[27px] -ml-[2px] w-[1074px] grid-cols-[40px_14px_28px_557px_27px_15px_27px_15px_27.500px_14.500px_27px_15px_140px_22px_14px_70px_auto]",
            aws: "text-[12px]", box: "w-[460px] h-[19.500px] pl-[9.500px] grid-cols-[20px_383px_auto]",
            search: "w-[58px]", alt: "w-[38px]", region: "w-[134px] text-[9px]", user: "w-[65px] text-[9px]", icon: "h-[10.500px]",
          }}
        />
      </div>
      <div className="h-[28px] shrink-0 border-b border-[#e4e5e8] bg-white flex items-center text-[#656871]">
        <Menu c="w-[25px] h-[20px] -ml-[4px]" />
        <T c="w-[20.500px] ml-[10.500px] text-[10px]"><Link>EC2</Link></T>
        <Right c="w-[6px] h-[8px] ml-[11px]" />
        <T c="w-[119.500px] ml-[11px] text-[10px]"><Link>Équilibreurs de charge</Link></T>
        <Right c="w-[6px] h-[8px] ml-[11.500px]" />
        <T c="w-[217px] ml-[10px] text-[10px] font-bold">a54b1c1fde6d94a10b453df5873cb250</T>
        <Hexagon c="w-[13px] h-[10.500px] ml-[565px] text-[#424650]" />
        <TermArrow c="w-[14px] h-[11px] ml-[19px] text-[#424650]" />
      </div>
      <div className="flex h-[285px] shrink-0 bg-white">
        <Side items={side2} frame="w-[173px] pt-[11px]" line="h-[18.500px]" head="mt-[5.700px]" pad="w-[6px]" chevron="mr-[23.500px]" />
        <div className="w-[15px] shrink-0 bg-[#f1f1f1] border-r-[1.500px] border-[#d8d8d8] flex flex-col items-center">
          <span className="h-[11px] flex items-center"><Up /></span>
          <i className="block w-[12.500px] h-[115px] bg-[#c1c1c1]" />
        </div>
        <main className="grow min-w-0 pl-[19.500px]">
          <div className="h-[2px] w-[819px] ml-[6px] border-b border-[#d5d7db]" />
          <div className="w-[831px] h-[50.500px] pt-[13px] pl-[12px] border-b border-[#c6c6cd] grid items-center font-bold text-[#424650] grid-cols-[19px_2px_95px_18px_121.500px_17.500px_69px_18px_158px_17.500px_117.500px_17.500px_96.500px_17px_16.500px_auto]">
            <Left c="w-[6.500px] h-[8px] text-[#b4b4bb]" />
            <i className="block w-px h-[22px] bg-[#e4e5e8]" />
            <span className="w-[95px] h-[36.500px] flex items-center justify-center border-b-[3px] border-[#006ce0] text-[#006ce0] pt-[3px]"><T c="w-[62.500px] text-[10.500px]">Écouteurs</T></span>
            {tabSep}<T c="w-[104px] text-[10.500px]">Mappage réseau</T>
            {tabSep}<T c="w-[52px] text-[10.500px]">Sécurité</T>
            {tabSep}<T c="w-[140.500px] text-[10.500px]">Surveillances de l'état</T>
            {tabSep}<T c="w-[100px] text-[10.500px]">Instances cibles</T>
            {tabSep}<T c="w-[79px] text-[10.500px]">Surveillance</T>
            {tabSep}
            <span className="block w-[5px] overflow-hidden border-r border-[#dcdde0]"><T c="w-[9px] text-[10.500px]">A</T></span>
            <Right c="w-[7px] h-[8.500px]" />
          </div>
          <div className="mt-[10.500px] w-[831px] h-[194px] rounded-[14px] border border-[#d5d7db] overflow-hidden text-[#0f141a]">
            <div className="pl-[17px] pt-[8px]">
              <div className="flex items-center h-[20px]">
                <T c="w-[76px] text-[12.500px] leading-none font-bold">Écouteurs</T>
                <span className="flex items-center justify-center w-[146px] h-[21px] ml-[573.500px] rounded-full border-[1.500px] border-[#006ce0] text-[#006ce0] font-bold"><T c="w-[108.500px]">Gérer les écouteurs</T></span>
              </div>
              <div className="mt-[3.500px] text-[#424650] leading-[13.200px]">
                <T c="w-[777.500px] h-[13.200px]">Un écouteur Classic Load Balancer utilise les protocoles et les ports que vous configurez pour vérifier les demandes de connexion et transférer le</T>
                <T c="w-[747px] h-[13.200px]">trafic reçu aux instances. L'écouteur utilise son protocole et son port pour vérifier les demandes de connexion. Lorsque le trafic est reçu par</T>
                <T c="w-[547px] h-[13.200px]">l'écouteur, il est transféré aux instances EC2 enregistrées à l'aide du protocole et du port de l'instance.</T>
              </div>
              <div className="mt-[5.500px] grid items-center h-[20px] text-[#424650] grid-cols-[698px_25px_23px_18.500px_12.500px_auto]">
                <span className="flex items-center w-[552.500px] h-[20.500px] rounded-[6px] border-[1.500px] border-[#8c8c94] pl-[9.500px]">
                  <Lens c="w-[12.500px] h-[9.500px]" />
                  <T c="w-[86px] ml-[9px] italic text-[#656871]">Filtrer écouteurs</T>
                </span>
                <Left c="w-[6.500px] h-[8px] text-[#b4b4bb]" />
                <T c="w-[5.500px] font-bold text-[#0f141a]">1</T>
                <Right c="w-[6.500px] h-[8px] text-[#b4b4bb]" />
                <i className="block w-px h-[20px] bg-[#c6c6cd]" />
                <Gear c="w-[13.500px] h-[10.500px]" />
              </div>
              <div className="mt-[6px] h-[23.500px] pt-[2px] pl-[1.500px] grid items-center border-b border-[#e4e5e8] font-bold text-[#424650] grid-cols-[104.500px_20.500px_18.500px_89px_20px_18.500px_175px_20px_18.500px_260px_20.500px_18px_auto]">
                <T c="w-[88px]">Protocole : Port</T><SortIcon /><Sep />
                <T c="w-[73px]">Instance Pr...</T><SortIcon /><Sep />
                <T c="w-[115px]">Stratégie de sécurité</T><SortIcon /><Sep />
                <T c="w-[164.500px]">Certificat SSL/TLS par défaut</T><SortIcon /><Sep />
                <T c="w-[29px]">Perm</T>
              </div>
              <div className="h-[27px] pt-[1.500px] pl-[1.500px] grid items-center border-b border-[#ebecee] grid-cols-[143.500px_127.500px_213.500px_298.500px_auto]">
                <T c="w-[60px]">HTTPS:443</T>
                <T c="w-[67px]">HTTP:31577</T>
                <T c="w-[147.500px]">ELBSecurityPolicy-2016-08</T>
                <T c="w-[258px]"><Link>*.stevymonkam.com (ID de certificat : a4806d</Link>...</T>
                <T c="w-[81px]">Non applicable</T>
              </div>
              <div className="h-[29px] pb-[3px] pl-[1.500px] grid items-center grid-cols-[143.500px_127.500px_213.500px_298.500px_auto]">
                <T c="w-[46.500px]">HTTP:80</T>
                <T c="w-[67px]">HTTP:30803</T>
                <T c="w-[81px]">Non applicable</T>
                <T c="w-[81px]">Non applicable</T>
                <T c="w-[81px]">Non applicable</T>
              </div>
            </div>
            <div className="flex items-center h-[10px] bg-[#f1f1f1] pl-[5px] pr-[5px]">
              <TriL /><i className="block w-[573.500px] h-[9px] bg-[#c1c1c1] ml-[6px] mr-auto" /><TriR />
            </div>
          </div>
        </main>
        <div className="w-[12px] shrink-0 bg-[#f1f1f1] flex flex-col items-center justify-between pb-px">
          <span className="h-[12px] flex items-center"><Up /></span>
          <i className="block w-[11px] h-[117px] bg-[#a8a8a8] self-end" />
        </div>
      </div>
      <div className="h-[7px] shrink-0 bg-[#c4c4c4] border-b border-[#a6a6a6]" />
      <div className="h-[3px] bg-white" />
    </section>
  );
}

export default function App() {
  return (
    <div className="w-[1072px] h-[813px] overflow-hidden bg-white flex flex-col font-['Noto_Sans',sans-serif]">
      <ListWindow />
      <DetailWindow />
    </div>
  );
}
